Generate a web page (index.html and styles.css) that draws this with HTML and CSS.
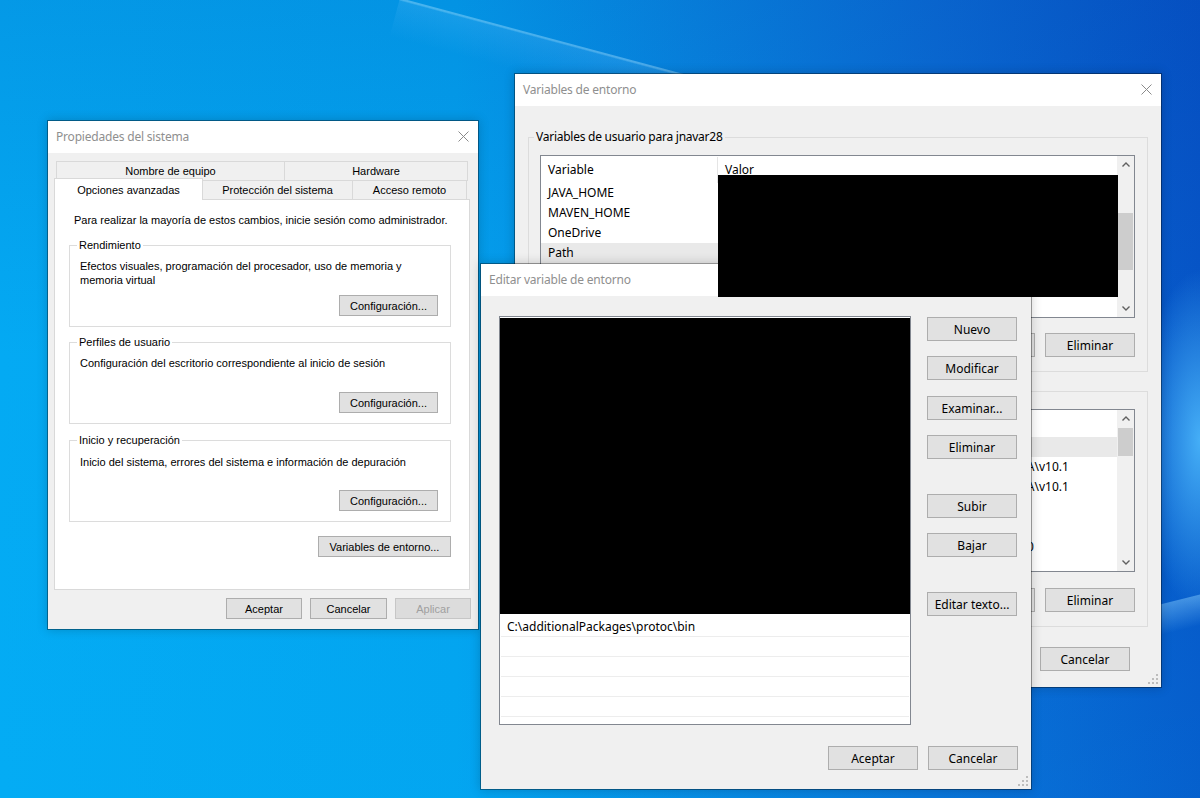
FILE: index.html
```html
<!DOCTYPE html>
<html lang="es">
<head>
<meta charset="utf-8">
<title>Variables de entorno</title>
<link rel="stylesheet" href="styles.css">
</head>
<body>
<main class="desktop">

  <section class="win win-sys">
    <header class="titlebar">
      <span class="title">Propiedades del sistema</span>
      <svg class="close" width="11" height="11" viewBox="0 0 11 11"><path d="M0.5 0.5L10.5 10.5M10.5 0.5L0.5 10.5"/></svg>
    </header>
    <div class="sys-body">
      <div class="tabrow row-back">
        <div class="tab t-nombre">Nombre de equipo</div>
        <div class="tab t-hw">Hardware</div>
      </div>
      <div class="tabrow row-front">
        <div class="tab tab-active t-opc">Opciones avanzadas</div>
        <div class="tab t-prot">Protección del sistema</div>
        <div class="tab t-acc">Acceso remoto</div>
      </div>
      <div class="panel">
        <p class="note">Para realizar la mayoría de estos cambios, inicie sesión como administrador.</p>
        <fieldset class="gb">
          <legend>Rendimiento</legend>
          <div class="gb-body">
            <p>Efectos visuales, programación del procesador, uso de memoria y memoria virtual</p>
            <button class="btn1 btn-cfg">Configuración...</button>
          </div>
        </fieldset>
        <fieldset class="gb gb-2">
          <legend>Perfiles de usuario</legend>
          <div class="gb-body">
            <p>Configuración del escritorio correspondiente al inicio de sesión</p>
            <button class="btn1 btn-cfg">Configuración...</button>
          </div>
        </fieldset>
        <fieldset class="gb gb-3">
          <legend>Inicio y recuperación</legend>
          <div class="gb-body">
            <p>Inicio del sistema, errores del sistema e información de depuración</p>
            <button class="btn1 btn-cfg">Configuración...</button>
          </div>
        </fieldset>
        <button class="btn1 btn-env">Variables de entorno...</button>
      </div>
      <div class="sys-actions">
        <button class="btn1 w76">Aceptar</button>
        <button class="btn1 w77">Cancelar</button>
        <button class="btn1 w76" disabled>Aplicar</button>
      </div>
    </div>
  </section>

  <section class="win win-env">
    <header class="titlebar">
      <span class="title">Variables de entorno</span>
      <svg class="close" width="11" height="11" viewBox="0 0 11 11"><path d="M0.5 0.5L10.5 10.5M10.5 0.5L0.5 10.5"/></svg>
    </header>
    <div class="env-body">
      <fieldset class="gb2">
        <legend>Variables de usuario para jnavar28</legend>
        <div class="list list-user">
          <div class="list-main">
            <div class="lh"><span class="c1">Variable</span><span class="c2">Valor</span></div>
            <div class="lr"><span class="c1">JAVA_HOME</span><span class="c2"></span></div>
            <div class="lr"><span class="c1">MAVEN_HOME</span><span class="c2"></span></div>
            <div class="lr"><span class="c1">OneDrive</span><span class="c2"></span></div>
            <div class="lr sel"><span class="c1">Path</span><span class="c2"></span></div>
            <div class="lr"><span class="c1">TEMP</span><span class="c2"></span></div>
            <div class="lr"><span class="c1">TMP</span><span class="c2"></span></div>
          </div>
          <div class="sb">
            <div class="sb-arrow"><svg width="8" height="5" viewBox="0 0 8 5"><path d="M0.5 4.5L4 1L7.5 4.5"/></svg></div>
            <div class="sb-track"><div class="sb-thumb thumb-user"></div></div>
            <div class="sb-arrow"><svg width="8" height="5" viewBox="0 0 8 5"><path d="M0.5 0.5L4 4L7.5 0.5"/></svg></div>
          </div>
        </div>
        <div class="btnrow">
          <button class="btn2">Nuevo...</button>
          <button class="btn2">Editar...</button>
          <button class="btn2">Eliminar</button>
        </div>
      </fieldset>
      <fieldset class="gb2 gb-sys">
        <legend>Variables del sistema</legend>
        <div class="list list-sys">
          <div class="list-main">
            <div class="lh"><span class="c1">Variable</span><span class="c2">Valor</span></div>
            <div class="lr sel"><span class="c1">ComSpec</span><span class="c2">C:\WINDOWS\system32\cmd.exe</span></div>
            <div class="lr"><span class="c1">CUDA_PATH</span><span class="c2">C:\Program Files\NVIDIA GPU Computing Toolkit\CUDA\v10.1</span></div>
            <div class="lr"><span class="c1">CUDA_PATH_V10_1</span><span class="c2">C:\Program Files\NVIDIA GPU Computing Toolkit\CUDA\v10.1</span></div>
            <div class="lr"><span class="c1">DriverData</span><span class="c2">C:\Windows\System32\Drivers\DriverData</span></div>
            <div class="lr"><span class="c1">NUMBER_OF_PROCESSORS</span><span class="c2">8</span></div>
            <div class="lr"><span class="c1">NVTOOLSEXT_PATH</span><span class="c2">C:\Program Files\NVIDIA GPU Computing Toolkit\v10_0</span></div>
            <div class="lr"><span class="c1">OS</span><span class="c2">Windows_NT</span></div>
          </div>
          <div class="sb">
            <div class="sb-arrow"><svg width="8" height="5" viewBox="0 0 8 5"><path d="M0.5 4.5L4 1L7.5 4.5"/></svg></div>
            <div class="sb-track"><div class="sb-thumb thumb-sys"></div></div>
            <div class="sb-arrow"><svg width="8" height="5" viewBox="0 0 8 5"><path d="M0.5 0.5L4 4L7.5 0.5"/></svg></div>
          </div>
        </div>
        <div class="btnrow btnrow-sys">
          <button class="btn2">Nueva...</button>
          <button class="btn2">Editar...</button>
          <button class="btn2">Eliminar</button>
        </div>
      </fieldset>
      <div class="btnrow env-actions">
        <button class="btn2">Aceptar</button>
        <button class="btn2">Cancelar</button>
      </div>
    </div>
    <svg class="grip" width="10" height="10" viewBox="0 0 10 10"><rect x="8" y="0" width="2" height="2"/><rect x="8" y="4" width="2" height="2"/><rect x="4" y="4" width="2" height="2"/><rect x="8" y="8" width="2" height="2"/><rect x="4" y="8" width="2" height="2"/><rect x="0" y="8" width="2" height="2"/></svg>
  </section>

  <section class="win win-edit">
    <header class="titlebar">
      <span class="title">Editar variable de entorno</span>
      <svg class="close" width="11" height="11" viewBox="0 0 11 11"><path d="M0.5 0.5L10.5 10.5M10.5 0.5L0.5 10.5"/></svg>
    </header>
    <div class="edit-body">
      <div class="edit-main">
        <div class="plist">
          <div class="redact-list"></div>
          <div class="prow">C:\additionalPackages\protoc\bin</div>
          <div class="prow"></div>
          <div class="prow"></div>
          <div class="prow"></div>
          <div class="prow"></div>
          <div class="prow"></div>
        </div>
        <div class="side">
          <button class="btn2">Nuevo</button>
          <button class="btn2 g15">Modificar</button>
          <button class="btn2 g16">Examinar...</button>
          <button class="btn2 g15">Eliminar</button>
          <button class="btn2 g35">Subir</button>
          <button class="btn2 g15">Bajar</button>
          <button class="btn2 g35">Editar texto...</button>
        </div>
      </div>
      <div class="edit-actions">
        <button class="btn2">Aceptar</button>
        <button class="btn2">Cancelar</button>
      </div>
    </div>
    <svg class="grip" width="10" height="10" viewBox="0 0 10 10"><rect x="8" y="0" width="2" height="2"/><rect x="8" y="4" width="2" height="2"/><rect x="4" y="4" width="2" height="2"/><rect x="8" y="8" width="2" height="2"/><rect x="4" y="8" width="2" height="2"/><rect x="0" y="8" width="2" height="2"/></svg>
  </section>

  <div class="redact-top"></div>
</main>
</body>
</html>
```

FILE: styles.css
```css
* { box-sizing: border-box; }

html, body {
  margin: 0;
  padding: 0;
  width: 1200px;
  height: 798px;
  overflow: hidden;
}

.desktop {
  position: relative;
  width: 1200px;
  height: 798px;
  overflow: hidden;
  font-family: "Noto Sans", "Open Sans", sans-serif;
  background-color: #0590e6;
  background-image:
    radial-gradient(ellipse 60px 170px at 1200px 440px, rgba(80, 190, 255, 0.85), rgba(80, 190, 255, 0) 100%),
    linear-gradient(to bottom, rgba(0, 30, 140, 0.12) 0%, rgba(0, 30, 140, 0) 45%, rgba(0, 190, 255, 0.10) 100%),
    linear-gradient(to right, #04aaf3 0%, #03a3ef 38%, #0888e2 58%, #0a6ed6 78%, #0656c8 100%);
}

.desktop::before {
  content: "";
  position: absolute;
  left: 400px;
  top: -2px;
  width: 720px;
  height: 40px;
  background: linear-gradient(to bottom, rgba(175, 228, 255, 0.4) 0, rgba(175, 228, 255, 0.4) 1.5px, rgba(120, 200, 255, 0.16) 3px, rgba(120, 200, 255, 0) 40px);
  transform: rotate(15deg);
  transform-origin: 0 0;
  z-index: 0;
}

.desktop::after {
  content: "";
  position: absolute;
  left: 1150px;
  top: 607px;
  width: 90px;
  height: 30px;
  background: linear-gradient(to bottom, rgba(140, 210, 255, 0.45) 0, rgba(140, 210, 255, 0) 100%);
  transform: rotate(-14deg);
  transform-origin: 0 0;
  z-index: 0;
}

/* ---------- generic window ---------- */
.win {
  position: absolute;
  display: flex;
  flex-direction: column;
  background: #f0f0f0;
  background-clip: padding-box;
  border: 1px solid rgba(0, 0, 0, 0.36);
  box-shadow: 0 0 10px rgba(0, 0, 0, 0.18);
}

.titlebar {
  flex: none;
  height: 32px;
  background: #fff;
  display: flex;
  align-items: center;
  justify-content: space-between;
  padding: 0 9px 2px 8px;
  font-family: "Noto Sans", sans-serif;
  font-size: 12px;
  letter-spacing: -0.2px;
  color: #8f8f8f;
}

.close path {
  stroke: #8a8a8a;
  stroke-width: 1;
  fill: none;
}

.grip {
  position: absolute;
  right: 3px;
  bottom: 3px;
}

.grip rect { fill: #bdbdbd; }

.win-sys  { left: 47px;  top: 120px; width: 432px; height: 510px; z-index: 1; }
.win-env  { left: 514px; top: 73px;  width: 648px; height: 615px; z-index: 2; }
.win-edit { left: 480px; top: 263px; width: 552px; height: 527px; z-index: 3; }

/* ---------- Propiedades del sistema ---------- */
.sys-body {
  flex: 1;
  display: flex;
  flex-direction: column;
  padding: 8px 8px 0 6px;
  font-family: "Liberation Sans", Arial, sans-serif;
  font-size: 11px;
  color: #000;
}

.tabrow {
  display: flex;
  height: 20px;
}

.row-back { margin-left: 2px; }
.row-front { margin-top: -1px; }

.tab {
  border: 1px solid #d9d9d9;
  background: #f0f0f0;
  display: flex;
  align-items: center;
  justify-content: center;
  margin-left: -1px;
  white-space: nowrap;
}

.tab:first-child { margin-left: 0; }

.t-nombre { width: 229px; }
.t-hw { width: 184px; }
.t-opc { width: 149px; }
.t-prot { width: 151px; }
.t-acc { width: 115px; }

.tab-active {
  background: #fff;
  margin-top: -2px;
  height: 22px;
  border-bottom: none;
  position: relative;
  z-index: 2;
}

.panel {
  margin-top: -1px;
  height: 391px;
  border: 1px solid #d9d9d9;
  background: #fff;
  padding: 14px 18px 0 14px;
  display: flex;
  flex-direction: column;
}

.note {
  margin: 0;
  padding-left: 5px;
  line-height: 13px;
  white-space: nowrap;
}

.gb {
  border: 1px solid #dcdcdc;
  margin: 11px 0 0 0;
  padding: 7px 12px 10px 10px;
  min-width: 0;
}

.gb-2 { margin-top: 8px; }
.gb-3 { margin-top: 9px; }

.gb legend {
  padding: 0 2px;
  margin-left: -3px;
  line-height: 14px;
}

.gb-body {
  height: 57px;
  display: flex;
  flex-direction: column;
  align-items: flex-start;
}

.gb-3 .gb-body p { margin-top: 1px; }

.gb-body p {
  margin: 0;
  line-height: 14px;
}

.btn1 {
  height: 21px;
  border: 1px solid #adadad;
  background: #e1e1e1;
  font: inherit;
  color: #000;
  padding: 0;
}

.btn1:disabled {
  color: #a0a0a0;
  border-color: #c6c6c6;
  background: #dcdcdc;
}

.btn-cfg {
  margin-top: auto;
  align-self: flex-end;
  width: 99px;
}

.btn-env {
  margin-top: 14px;
  align-self: flex-end;
  width: 133px;
}

.sys-actions {
  display: flex;
  justify-content: flex-end;
  gap: 8px;
  margin-top: 8px;
  margin-right: -1px;
}

.w76 { width: 76px; }
.w77 { width: 77px; }

/* ---------- Variables de entorno ---------- */
.env-body {
  flex: 1;
  padding: 23px 13px 0 13px;
  font-size: 12px;
  line-height: 16px;
  color: #000;
}

.gb2 {
  border: 1px solid #dcdcdc;
  margin: 0;
  padding: 10px 12px 14px 11px;
  min-width: 0;
}

.gb2 legend {
  padding: 0 2px;
  margin-left: -6px;
  line-height: 16px;
  letter-spacing: -0.25px;
}

.gb-sys { margin-top: 11px; }

.list {
  height: 163px;
  border: 1px solid #828790;
  background: #fff;
  display: flex;
  overflow: hidden;
}

.list-main {
  flex: 1;
  min-width: 0;
  overflow: hidden;
  padding-top: 1px;
}

.lh {
  display: flex;
  height: 26px;
  align-items: center;
}

.lh .c1 {
  height: 100%;
  display: flex;
  align-items: center;
  border-right: 1px solid #e5e5e5;
}

.lr {
  display: flex;
  height: 20px;
  align-items: center;
  white-space: nowrap;
}

.lr.sel { background: #e9e9e9; }

.c1 {
  flex: none;
  width: 177px;
  padding-left: 7px;
}

.c2 {
  padding-left: 7px;
  white-space: nowrap;
}

.sb {
  flex: none;
  width: 17px;
  display: flex;
  flex-direction: column;
  background: #f0f0f0;
}

.sb-arrow {
  flex: none;
  height: 17px;
  display: flex;
  align-items: center;
  justify-content: center;
}

.sb-arrow path {
  stroke: #606060;
  stroke-width: 1.4;
  fill: none;
}

.sb-track {
  flex: 1;
  position: relative;
}

.sb-thumb {
  margin: 0 1px;
  background: #cdcdcd;
}

.thumb-user { margin-top: 40px; height: 57px; }
.thumb-sys { margin-top: 1px; height: 28px; }

.btnrow {
  display: flex;
  justify-content: flex-end;
  gap: 10px;
  margin-top: 15px;
}

.btnrow-sys { margin-top: 16px; }

.btn2 {
  width: 90px;
  height: 24px;
  border: 1px solid #adadad;
  background: #e1e1e1;
  font-family: "Noto Sans", sans-serif;
  font-size: 12px;
  color: #000;
  padding: 0;
}

.env-actions {
  margin-top: 20px;
  padding-right: 18px;
}

/* ---------- Editar variable de entorno ---------- */
.edit-body {
  flex: 1;
  display: flex;
  flex-direction: column;
  padding: 20px 13px 18px 18px;
  font-size: 12px;
  line-height: 16px;
}

.edit-main {
  display: flex;
  gap: 16px;
}

.plist {
  width: 412px;
  height: 409px;
  border: 1px solid #828790;
  background: #fff;
  overflow: hidden;
}

.redact-list {
  margin-top: 1px;
  height: 296px;
  margin-bottom: 3px;
  background: #000;
}

.prow {
  height: 20px;
  line-height: 19px;
  padding-left: 6px;
  margin: 0 1px;
  border-bottom: 1px solid #ededed;
  white-space: nowrap;
}

.side {
  width: 90px;
  display: flex;
  flex-direction: column;
  padding-top: 1px;
}

.g15 { margin-top: 15px; }
.g16 { margin-top: 16px; }
.g35 { margin-top: 35px; }

.edit-actions {
  display: flex;
  justify-content: flex-end;
  gap: 10px;
  margin-top: 21px;
}

/* ---------- redaction overlay ---------- */
.redact-top {
  position: absolute;
  left: 718px;
  top: 175px;
  width: 400px;
  height: 122px;
  background: #000;
  z-index: 10;
}
```
